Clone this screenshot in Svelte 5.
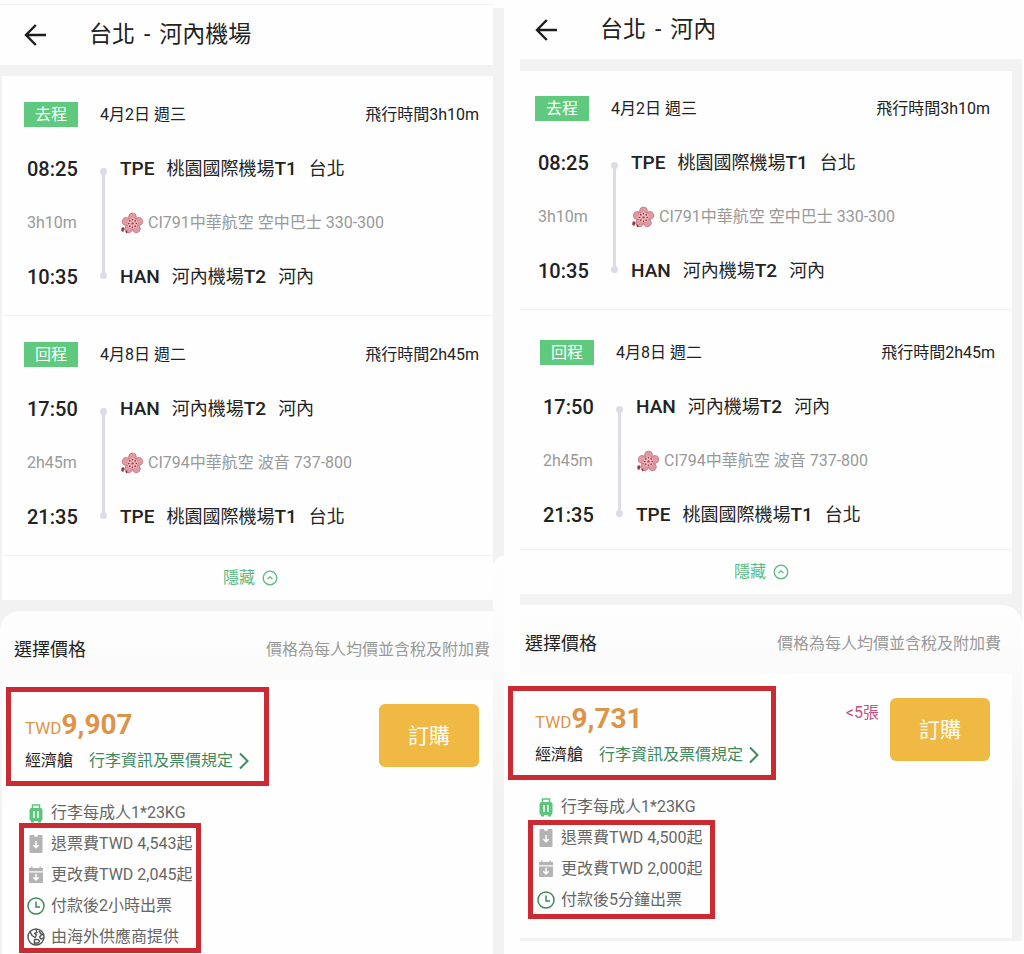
<script lang="ts">
  const outbound = {
    tag: "去程",
    date: "4月2日 週三",
    duration: "3h10m",
    depart: { time: "08:25", code: "TPE", airport: "桃園國際機場", terminal: "T1", city: "台北" },
    flight: "CI791中華航空 空中巴士 330-300",
    arrive: { time: "10:35", code: "HAN", airport: "河內機場", terminal: "T2", city: "河內" },
  };

  const inbound = {
    tag: "回程",
    date: "4月8日 週二",
    duration: "2h45m",
    depart: { time: "17:50", code: "HAN", airport: "河內機場", terminal: "T2", city: "河內" },
    flight: "CI794中華航空 波音 737-800",
    arrive: { time: "21:35", code: "TPE", airport: "桃園國際機場", terminal: "T1", city: "台北" },
  };

  const panels = [
    {
      side: "left",
      from: "台北",
      to: "河內機場",
      price: "9,907",
      seats: "",
      baggage: "行李每成人1*23KG",
      rules: [
        { icon: "refund", text: "退票費TWD 4,543起" },
        { icon: "change", text: "更改費TWD 2,045起" },
        { icon: "clock", text: "付款後2小時出票" },
        { icon: "globe", text: "由海外供應商提供" },
      ],
    },
    {
      side: "right",
      from: "台北",
      to: "河內",
      price: "9,731",
      seats: "<5張",
      baggage: "行李每成人1*23KG",
      rules: [
        { icon: "refund", text: "退票費TWD 4,500起" },
        { icon: "change", text: "更改費TWD 2,000起" },
        { icon: "clock", text: "付款後5分鐘出票" },
      ],
    },
  ];

  const petals = [0, 72, 144, 216, 288];
  const stamens = [0, 45, 90, 135, 180, 225, 270, 315];

  let open = $state([true, true]);
</script>

{#snippet stop(s)}
  <span class="time">{s.time}</span>
  <span class="place">
    <b>{s.code}</b>
    <span>{s.airport}<b>{s.terminal}</b></span>
    <span>{s.city}</span>
  </span>
{/snippet}

{#snippet segment(seg)}
  <section class="segment">
    <div class="segment-head">
      <span class="tag">{seg.tag}</span>
      <span class="date">{seg.date}</span>
      <span class="total">飛行時間{seg.duration}</span>
    </div>
    <div class="route">
      <span class="track"></span>
      {@render stop(seg.depart)}
      <span class="elapsed">{seg.duration}</span>
      <span class="flight">
        <svg width="24" height="22" viewBox="0 0 24 22" aria-hidden="true">
          {#each petals as angle}
            <ellipse
              cx="12.500"
              cy="5"
              rx="3.900"
              ry="4"
              transform="rotate({angle} 12.500 11.500)"
              fill="#e09aa2"
              stroke="#b5626f"
              stroke-width=".6"
            />
          {/each}
          <circle cx="12.500" cy="11.500" r="5" fill="#f0bcc0" />
          {#each stamens as angle}
            <circle cx="12.500" cy="7.700" r=".8" transform="rotate({angle} 12.500 11.500)" fill="#8d2638" />
          {/each}
          <circle cx="12.500" cy="11.500" r="1.200" fill="#b34a58" />
          <path d="M1.500 16l1.800-1 1 2-1 3-2-1zM5.500 19l1.500-.6.6 2-1.500 1z" fill="#8d3444" />
        </svg>
        {seg.flight}
      </span>
      {@render stop(seg.arrive)}
    </div>
  </section>
{/snippet}

{#snippet icon(name)}
  <svg width="20" height="20" viewBox="0 0 20 20" fill="none" aria-hidden="true">
    {#if name === "bag"}
      <path d="M6.500 5V2h7v3" stroke="#5cc47c" stroke-width="1.500" />
      <rect x="3.500" y="5" width="13" height="13" rx="2" fill="#5cc47c" />
      <path d="M5 17h3v2.500H5zM12 17h3v2.500h-3z" fill="#5cc47c" />
      <path d="M8 8v7M12 8v7" stroke="#fff" stroke-width="1.500" />
    {:else if name === "refund"}
      <path d="M4.500 1H8a2 2 0 0 0 4 0h3.500a1 1 0 0 1 1 1v16a1 1 0 0 1-1 1h-11a1 1 0 0 1-1-1V2a1 1 0 0 1 1-1z" fill="#b3b3b3" />
      <path d="M10 7v6.500M7.300 11l2.700 2.700 2.700-2.700" stroke="#fff" stroke-width="1.500" />
    {:else if name === "change"}
      <path d="M3 3h2V1.500h1.500V3h7V1.500H15V3h2v3.200H3zM3 7.500h14V17a1 1 0 0 1-1 1H4a1 1 0 0 1-1-1z" fill="#b3b3b3" />
      <path d="M10 8.800v6M7.300 12.300l2.700 2.700 2.700-2.700" stroke="#fff" stroke-width="1.500" />
    {:else if name === "clock"}
      <circle cx="10" cy="10" r="8" stroke="#3f8a5c" stroke-width="1.500" />
      <path d="M10 5.500V11h4" stroke="#3f8a5c" stroke-width="1.500" />
    {:else}
      <circle cx="10" cy="10" r="8" stroke="#555" stroke-width="1.400" />
      <path d="M4 4.500l2 4 3 2 1.500-2.500-2-1.500 2.500-1-1-3M18 8l-3-1-2-3M8.500 18V12.500h3.500l1.500 1.500-1 2h-4M18 11l-3 1-1.500-2 2-2" stroke="#555" stroke-width="1.400" stroke-linejoin="round" />
    {/if}
  </svg>
{/snippet}

<main class="compare">
  {#each panels as panel, i}
    <div class="panel {panel.side}">
      <header>
        <button class="back" aria-label="返回">
          <svg width="24" height="24" viewBox="0 0 24 24" fill="none" stroke="#1c1c1c" stroke-width="2.400" aria-hidden="true">
            <path d="M23 12H3.500M12.800 2L3 12l9.800 10" />
          </svg>
        </button>
        <h1><span>{panel.from}</span><span>-</span><span>{panel.to}</span></h1>
      </header>

      <div class="trip">
        {#if open[i]}
          {@render segment(outbound)}
          {@render segment(inbound)}
        {/if}
        <button class="toggle" aria-expanded={open[i]} onclick={() => (open[i] = !open[i])}>
          隱藏
          <svg width="16" height="16" viewBox="0 0 16 16" fill="none" stroke="#58b982" aria-hidden="true">
            <circle cx="8" cy="8" r="6.800" stroke-width="1.300" />
            <path d="M5.500 9L8 6.800 10.500 9" stroke-width="1.300" />
          </svg>
        </button>
      </div>

      <div class="fares">
        <div class="fares-head">
          <h2>選擇價格</h2>
          <span>價格為每人均價並含稅及附加費</span>
        </div>
        <div class="fare">
          <div class="offer">
            <div class="summary">
              <p class="price">TWD<strong>{panel.price}</strong></p>
              <p class="cabin">
                經濟艙
                <a href="#rules-{panel.side}">
                  行李資訊及票價規定
                  <svg width="12" height="18" viewBox="0 0 12 18" fill="none" stroke="#3f8a5c" stroke-width="2" aria-hidden="true">
                    <path d="M2 1.500L9.500 9 2 16.500" />
                  </svg>
                </a>
              </p>
              <span class="mark"></span>
            </div>
            {#if panel.seats}
              <span class="seats">{panel.seats}</span>
            {/if}
            <button class="book">訂購</button>
          </div>
          <p class="term">{@render icon("bag")}{panel.baggage}</p>
          <div class="rules" id="rules-{panel.side}">
            <ul>
              {#each panel.rules as rule}
                <li class="term">{@render icon(rule.icon)}{rule.text}</li>
              {/each}
            </ul>
            <span class="mark"></span>
          </div>
        </div>
      </div>
    </div>
    {#if i === 0}
      <div class="gutter"><div class="strip"><span></span></div></div>
    {/if}
  {/each}
</main>

<style>
  :global(body) {
    margin: 0;
    background: #fefefe;
  }

  .compare {
    display: grid;
    grid-template-columns: minmax(0, 493fr) 27px minmax(0, 502fr);
    align-items: start;
    padding-right: 2px;
    font-family: Roboto, "Noto Sans CJK TC", sans-serif;
    font-size: 16px;
    line-height: 24px;
    color: #222;
  }

  h1,
  h2,
  p,
  ul {
    margin: 0;
    padding: 0;
    font-weight: 400;
  }

  button {
    padding: 0;
    border: 0;
    background: none;
    font: inherit;
    cursor: pointer;
  }

  svg {
    display: block;
    flex: none;
  }

  b {
    font-size: 19px;
    font-weight: 500;
  }

  .panel {
    background: #f2f2f2;
  }

  .left {
    border-top: 4px solid #fefefe;
  }

  header {
    display: flex;
    align-items: center;
    height: 60px;
    padding-left: 23px;
    background: #fefefe;
  }

  .left header {
    border-top: 1px solid #f2f2f2;
  }

  .right header {
    height: 59px;
    padding-left: 14px;
  }

  h1 {
    display: flex;
    gap: 9px;
    margin-left: 42px;
    font-size: 23px;
    line-height: 32px;
  }

  .trip {
    margin: 11px 0 11px 2px;
    background: #fefefe;
  }

  .right .trip {
    margin: 12px 10px 11px 0;
  }

  .segment {
    padding: 26px 14px 11px 22px;
    border-bottom: 1px solid #f2f2f2;
  }

  .right .segment {
    padding: 25px 22px 11px 15px;
  }

  /* return leg sits slightly lower and further right */
  .right .segment + .segment {
    padding: 30px 17px 7px 20px;
  }

  .segment-head {
    display: flex;
    align-items: center;
  }

  .tag {
    width: 54px;
    background: #5fca7e;
    color: #fff;
    line-height: 25px;
    text-align: center;
  }

  .date {
    margin-left: 22px;
  }

  .total {
    margin-left: auto;
  }

  .route {
    position: relative;
    display: grid;
    grid-template-columns: 93px 1fr;
    grid-auto-rows: 54px;
    align-items: center;
    padding-left: 3px;
    margin-top: 15px;
  }

  .time {
    font-size: 20px;
    font-weight: 500;
  }

  .place {
    display: flex;
    align-items: baseline;
    gap: 12px;
    font-size: 18px;
    white-space: nowrap;
  }

  .elapsed,
  .flight {
    color: #999;
  }

  .flight {
    display: flex;
    align-items: center;
    gap: 4px;
    white-space: nowrap;
  }

  .track {
    position: absolute;
    left: 78px;
    top: 29px;
    bottom: 28px;
    width: 3px;
    background: #dcdce6;
  }

  .track::before,
  .track::after {
    content: "";
    position: absolute;
    left: -2px;
    width: 7px;
    height: 7px;
    border-radius: 50%;
    background: #dcdce6;
  }

  .track::before {
    top: -3px;
  }

  .track::after {
    bottom: -3px;
  }

  .toggle {
    display: flex;
    align-items: center;
    justify-content: center;
    gap: 7px;
    width: 100%;
    height: 44px;
    padding-left: 6px;
    color: #58b982;
  }

  .right .toggle {
    padding: 0 9px 0 0;
  }

  .fares {
    border-radius: 20px 0 0 0;
    background: linear-gradient(#fefefe, #fafafa 70px, #f2f2f2 200px);
  }

  .right .fares {
    padding-bottom: 3px;
    border-radius: 0 20px 0 0;
  }

  .fares-head {
    display: flex;
    align-items: center;
    justify-content: space-between;
    height: 69px;
    padding: 8px 3px 0 14px;
    box-sizing: border-box;
    color: #999;
  }

  .right .fares-head {
    padding: 8px 21px 0 5px;
  }

  h2 {
    font-size: 18px;
    color: #222;
  }

  .fare {
    margin-left: 2px;
    padding: 24px 14px 2px 23px;
    background: #fefefe;
  }

  .right .fare {
    margin: 0 10px 0 0;
    padding: 24px 22px 23px 15px;
  }

  .offer {
    display: flex;
    align-items: flex-start;
    margin-bottom: 20px;
  }

  .summary,
  .rules {
    position: relative;
  }

  .summary {
    margin-right: auto;
    padding-top: 4px;
  }

  .price {
    color: #dd9448;
    font-size: 17px;
    line-height: 34px;
  }

  .price strong {
    font-size: 28px;
    font-weight: 700;
  }

  .cabin,
  .cabin a {
    display: flex;
    align-items: center;
  }

  .cabin {
    gap: 16px;
    height: 32px;
    white-space: nowrap;
  }

  .cabin a {
    gap: 5px;
    color: #3f8a5c;
    text-decoration: none;
  }

  .seats {
    margin: 3px 11px 0 0;
    color: #c9527c;
  }

  .book {
    width: 100px;
    height: 63px;
    border-radius: 6px;
    background: #f0b944;
    color: #fff;
    font-size: 21px;
  }

  ul {
    list-style: none;
  }

  .term {
    display: flex;
    align-items: center;
    gap: 5px;
    height: 31px;
    padding-left: 1px;
    color: #666;
    white-space: nowrap;
  }

  .rules {
    width: max-content;
  }

  /* red highlight frames drawn over the content */
  .mark {
    position: absolute;
    inset: -17px -19px -9px -19px;
    border: 5px solid #cb2a33;
    pointer-events: none;
  }

  .rules .mark {
    inset: -5px -9px -1px -6px;
  }

  .right .summary .mark {
    inset: -12px -16px -9px -27px;
  }

  .right .rules .mark {
    inset: -2px -13px -4px -7px;
  }

  .gutter {
    align-self: stretch;
    display: flex;
    padding-top: 8px;
  }

  .strip {
    display: flex;
    width: 11px;
    padding-top: 548px;
    background: #f2f2f2;
  }

  .strip span {
    flex: 1;
    border-radius: 11px 0 0 0;
    background: linear-gradient(#fefefe, #fcfcfc 60px, #f2f2f2 240px);
  }
</style>
